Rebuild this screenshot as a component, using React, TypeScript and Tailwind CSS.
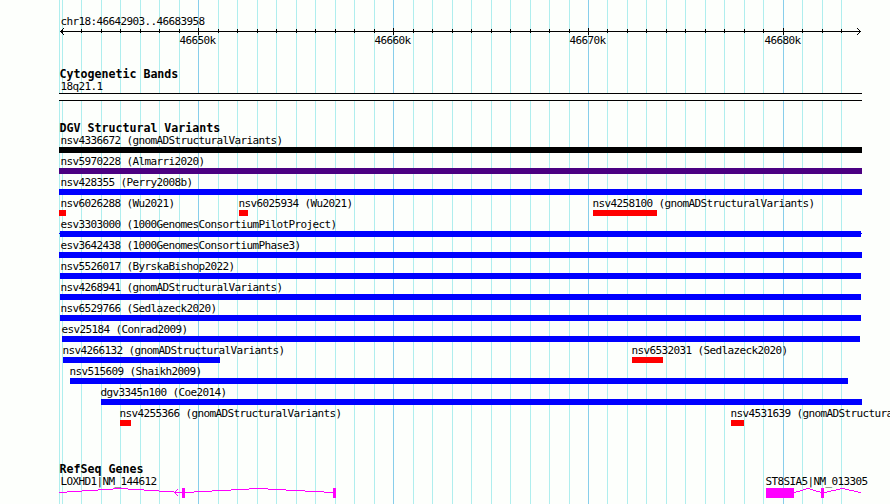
const START = 46642903;
const SPAN = 41056;

// genomic position -> pixel column
const toX = (pos: number) => Math.round(60 + ((pos - START) * 800) / SPAN);

const ticks = Array.from({ length: 41 }, (_, i) => {
  const kb = 46643 + i;
  return { kb, x: toX(kb * 1000), major: kb % 10 === 0 };
});

interface Feature {
  label: string;
  x: number;
  end: number;
  color: string;
  nub?: boolean;
}

const BLUE = "bg-[#0000ff]";
const RED = "bg-[#ff0000]";

const rows: Feature[][] = [
  [{ label: "nsv4336672 (gnomADStructuralVariants)", x: 59, end: 862, color: "bg-black" }],
  [{ label: "nsv5970228 (Almarri2020)", x: 59, end: 862, color: "bg-[#4b0082]" }],
  [{ label: "nsv428355 (Perry2008b)", x: 59, end: 862, color: BLUE }],
  [
    { label: "nsv6026288 (Wu2021)", x: 59, end: 66, color: RED },
    { label: "nsv6025934 (Wu2021)", x: 239, end: 248, color: RED },
    { label: "nsv4258100 (gnomADStructuralVariants)", x: 593, end: 657, color: RED },
  ],
  [{ label: "esv3303000 (1000GenomesConsortiumPilotProject)", x: 60, end: 861, color: BLUE, nub: true }],
  [{ label: "esv3642438 (1000GenomesConsortiumPhase3)", x: 59, end: 862, color: BLUE }],
  [{ label: "nsv5526017 (ByrskaBishop2022)", x: 60, end: 861, color: BLUE }],
  [{ label: "nsv4268941 (gnomADStructuralVariants)", x: 60, end: 861, color: BLUE }],
  [{ label: "nsv6529766 (Sedlazeck2020)", x: 60, end: 861, color: BLUE }],
  [{ label: "esv25184 (Conrad2009)", x: 62, end: 860, color: BLUE }],
  [
    { label: "nsv4266132 (gnomADStructuralVariants)", x: 63, end: 220, color: BLUE },
    { label: "nsv6532031 (Sedlazeck2020)", x: 632, end: 663, color: RED },
  ],
  [{ label: "nsv515609 (Shaikh2009)", x: 70, end: 848, color: BLUE }],
  [{ label: "dgv3345n100 (Coe2014)", x: 101, end: 862, color: BLUE }],
  [
    { label: "nsv4255366 (gnomADStructuralVariants)", x: 120, end: 131, color: RED },
    { label: "nsv4531639 (gnomADStructuralVariants)", x: 731, end: 744, color: RED },
  ],
];

function Label({ children }: { children: string }) {
  return (
    <div className="h-[13px] pl-[0.5px] text-[11px] leading-[13px] tracking-[-0.622px] whitespace-pre">
      {children}
    </div>
  );
}

function Title({ children }: { children: string }) {
  return (
    <h2 className="ml-[59px] h-[13px] pl-[0.4px] text-[11.63px] leading-[15px] font-bold whitespace-pre">
      {children}
    </h2>
  );
}

function Gridlines() {
  return (
    <svg className="absolute inset-0" width="890" height="504" shapeRendering="crispEdges">
      <rect x="59" y="0" width="1" height="504" fill="#afeeee" />
      {ticks.map((t) => (
        <rect key={t.kb} x={t.x} y="0" width="1" height="504" fill={t.major ? "#87ceeb" : "#afeeee"} />
      ))}
    </svg>
  );
}

function Ruler() {
  return (
    <svg className="block h-[7px] w-[890px]" viewBox="0 0 890 7" shapeRendering="crispEdges">
      <rect x="60" y="3" width="801" height="1" />
      {ticks.map((t) => (
        <rect key={t.kb} x={t.x} y={t.major ? 0 : 1} width="1" height={t.major ? 7 : 4} />
      ))}
      {[1, 2, 3].map((d) => (
        <g key={d}>
          <rect x={60 + d} y={3 - d} width="1" height="1" />
          <rect x={60 + d} y={3 + d} width="1" height="1" />
          <rect x={860 - d} y={3 - d} width="1" height="1" />
          <rect x={860 - d} y={3 + d} width="1" height="1" />
        </g>
      ))}
    </svg>
  );
}

function FeatureRow({ features }: { features: Feature[] }) {
  return (
    <div className="grid h-[21px]">
      {features.map((f) => (
        <div key={f.label} className="[grid-area:1/1]" style={{ marginLeft: f.x }}>
          <div style={{ marginLeft: f.x < 61 ? 60 - f.x : -1 }}>
            <Label>{f.label}</Label>
          </div>
          <div className={`relative h-1.5 ${f.color}`} style={{ width: f.end - f.x }}>
            {f.nub && <div className="absolute top-0.5 -left-px h-px w-[803px] bg-[#0000ff]" />}
          </div>
        </div>
      ))}
    </div>
  );
}

function Genes() {
  return (
    <svg
      className="block h-[16px] w-[890px]"
      viewBox="0 1 890 16"
      fill="none"
      stroke="#ff00ff"
      shapeRendering="crispEdges"
    >
      <path d="M59 5.5H67M67 4.5H82M82 3.5H98M98 2.5H113M113 1.5H128M128 2.5H144M144 3.5H159M159 4.5H174M174 5.5H182" />
      <path d="M177.5 2V3M176.5 3V4M175.5 4V5M174.5 5V6M175.5 6V7M176.5 7V8M177.5 8V9" />
      <path d="M185 5.5H194M194 4.5H212M212 3.5H231M231 2.5H249M249 1.5H268M268 2.5H286M286 3.5H305M305 4.5H324M324 5.5H333" />
      <path d="M794 5.5H796M796 4.5H800M800 3.5H803M803 2.5H806M806 1.5H810M810 2.5H813M813 3.5H816M816 4.5H820M820 5.5H821" />
      <path d="M824 5.5H827M827 4.5H831M831 3.5H836M836 2.5H840M840 1.5H845M845 2.5H849M849 3.5H854M854 4.5H858M858 5.5H861" />
      <g fill="#ff00ff" stroke="none">
        <rect x="182" y="1" width="3" height="10" />
        <rect x="333" y="1" width="3" height="10" />
        <rect x="766" y="1" width="28" height="10" />
        <rect x="821" y="1" width="3" height="10" />
      </g>
    </svg>
  );
}

export default function App() {
  return (
    <div className="relative h-[504px] w-[890px] overflow-hidden bg-[#fdfffc] font-['DejaVu_Sans_Mono',monospace] text-black">
      <Gridlines />
      <div className="relative flex flex-col pt-[15px]">
        <div className="ml-[60px]">
          <Label>chr18:46642903..46683958</Label>
        </div>
        <Ruler />
        <div className="-mt-px grid h-[13px]">
          {ticks
            .filter((t) => t.major)
            .map((t) => (
              <div key={t.kb} className="[grid-area:1/1]" style={{ marginLeft: t.x - 19 }}>
                <Label>{`${t.kb}k`}</Label>
              </div>
            ))}
        </div>

        <div className="mt-5">
          <Title>Cytogenetic Bands</Title>
        </div>
        <div className="ml-[60px]">
          <Label>18q21.1</Label>
        </div>
        <div className="ml-[59px] h-2 w-[803px] border-y border-black bg-[#fdfffc]" />

        <div className="mt-5">
          <Title>DGV Structural Variants</Title>
        </div>
        <div>
          {rows.map((features) => (
            <FeatureRow key={features[0].label} features={features} />
          ))}
        </div>

        <div className="mt-[34px]">
          <Title>RefSeq Genes</Title>
        </div>
        <div className="grid">
          <div className="ml-[60px] [grid-area:1/1]">
            <Label>LOXHD1|NM_144612</Label>
          </div>
          <div className="ml-[765px] [grid-area:1/1]">
            <Label>ST8SIA5|NM_013305</Label>
          </div>
        </div>
        <Genes />
      </div>
    </div>
  );
}
